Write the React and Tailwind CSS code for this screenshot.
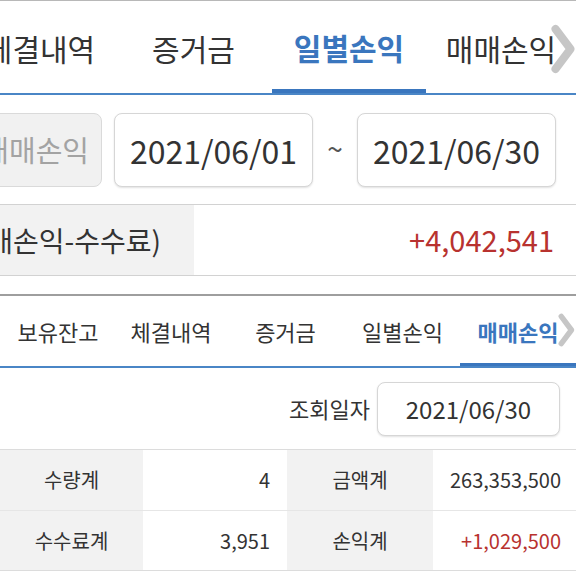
import React from 'react';

const TOP_TABS = [
  { label: '체결내역', width: 'w-[150px]' },
  { label: '증거금', width: 'w-[157px]' },
  { label: '일별손익', width: 'w-[154px]', active: true },
  { label: '매매손익', width: 'w-[150px]' },
];

const SUB_TABS = [
  { label: '보유잔고', width: 'w-[116px]' },
  { label: '체결내역', width: 'w-[110px]' },
  { label: '증거금', width: 'w-[119px]' },
  { label: '일별손익', width: 'w-[115px]' },
  { label: '매매손익', width: 'w-[116px]', active: true },
];

// Right-side scroll hint arrow
function Chevron({ className }) {
  return (
    <svg className={className} viewBox="0 0 26 50" fill="none">
      <path
        d="M6 5 L21 25 L6 45"
        stroke="#c6c6c6"
        strokeWidth="8"
        strokeLinecap="round"
        strokeLinejoin="round"
      />
    </svg>
  );
}

function DateBox({ value, className }) {
  return (
    <div
      className={`flex items-center justify-center rounded-[8px] border border-[#d6d6d6] bg-white shadow-[0_1px_2px_rgba(0,0,0,0.12)] text-[#333] ${className}`}
    >
      {value}
    </div>
  );
}

export default function App() {
  return (
    <div className="w-[576px] h-[571px] overflow-hidden bg-white font-['Noto_Sans_CJK_KR','Noto_Sans',sans-serif] text-[#333]">
      {/* top tab bar */}
      <div className="relative border-t border-[#b8b8b8]">
        <div className="flex h-[94px] -ml-[35px] border-b-2 border-[#4a86c6]">
          {TOP_TABS.map((tab) => (
            <div
              key={tab.label}
              className={`${tab.width} shrink-0 flex items-center justify-center whitespace-nowrap text-[30px] ${
                tab.active ? 'font-bold text-[#3a76be] border-b-[4px] border-[#3a76be] pt-[4px]' : 'pt-[2px]'
              }`}
            >
              {tab.label}
            </div>
          ))}
        </div>
        <Chevron className="absolute right-0 top-[23px] w-[27px] h-[50px]" />
      </div>

      {/* period selection */}
      <div className="flex items-center h-[74px] mt-[18px] -ml-[40px] text-[32px]">
        <div className="w-[142px] h-full shrink-0 flex items-center justify-end pr-[12px] overflow-hidden whitespace-nowrap rounded-[8px] border border-[#dadada] bg-[#f1f1f1] text-[29px] text-[#a3a3a3]">
          매매손익
        </div>
        <DateBox value="2021/06/01" className="ml-[12px] w-[199px] h-full shrink-0" />
        <div className="w-[44px] shrink-0 text-center text-[28px] text-[#555] pb-[4px]">~</div>
        <DateBox value="2021/06/30" className="w-[199px] h-full shrink-0" />
      </div>

      {/* total row */}
      <div className="flex h-[72px] mt-[17px] border-y border-[#d2d2d2]">
        <div className="w-[194px] shrink-0 flex items-center justify-end pr-[33px] overflow-hidden whitespace-nowrap bg-[#f2f2f2] text-[28px]">
          실현손익(매매손익-수수료)
        </div>
        <div className="flex-1 flex items-center justify-end pr-[22px] text-[29px] text-[#b8322f]">
          +4,042,541
        </div>
      </div>

      {/* sub tab bar */}
      <div className="relative mt-[18px] border-t-2 border-[#9e9e9e]">
        <div className="flex h-[72px] border-b-2 border-[#4a86c6]">
          {SUB_TABS.map((tab) => (
            <div
              key={tab.label}
              className={`${tab.width} shrink-0 flex items-center justify-center whitespace-nowrap text-[22px] ${
                tab.active ? 'font-bold text-[#3a76be] border-b-[3px] border-[#3a76be] pt-[3px]' : ''
              }`}
            >
              {tab.label}
            </div>
          ))}
        </div>
        <Chevron className="absolute right-0 top-[17px] w-[20px] h-[34px]" />
      </div>

      {/* query date */}
      <div className="flex items-center justify-end h-[81px] pr-[16px]">
        <span className="text-[22px] mr-[7px]">조회일자</span>
        <DateBox value="2021/06/30" className="w-[183px] h-[54px] text-[24px]" />
      </div>

      {/* summary table */}
      <div className="grid grid-cols-[143px_144px_146px_143px] border-y border-[#dcdcdc] text-[20px]">
        <div className="h-[61px] flex items-center justify-center bg-[#f2f2f2] border-b border-[#e6e6e6]">수량계</div>
        <div className="h-[61px] flex items-center justify-end pr-[17px] border-b border-[#e6e6e6]">4</div>
        <div className="h-[61px] flex items-center justify-center bg-[#f2f2f2] border-b border-[#e6e6e6]">금액계</div>
        <div className="h-[61px] flex items-center justify-end pr-[15px] border-b border-[#e6e6e6]">263,353,500</div>
        <div className="h-[59px] flex items-center justify-center bg-[#f2f2f2]">수수료계</div>
        <div className="h-[59px] flex items-center justify-end pr-[17px]">3,951</div>
        <div className="h-[59px] flex items-center justify-center bg-[#f2f2f2]">손익계</div>
        <div className="h-[59px] flex items-center justify-end pr-[15px] text-[#b8322f]">+1,029,500</div>
      </div>
    </div>
  );
}
